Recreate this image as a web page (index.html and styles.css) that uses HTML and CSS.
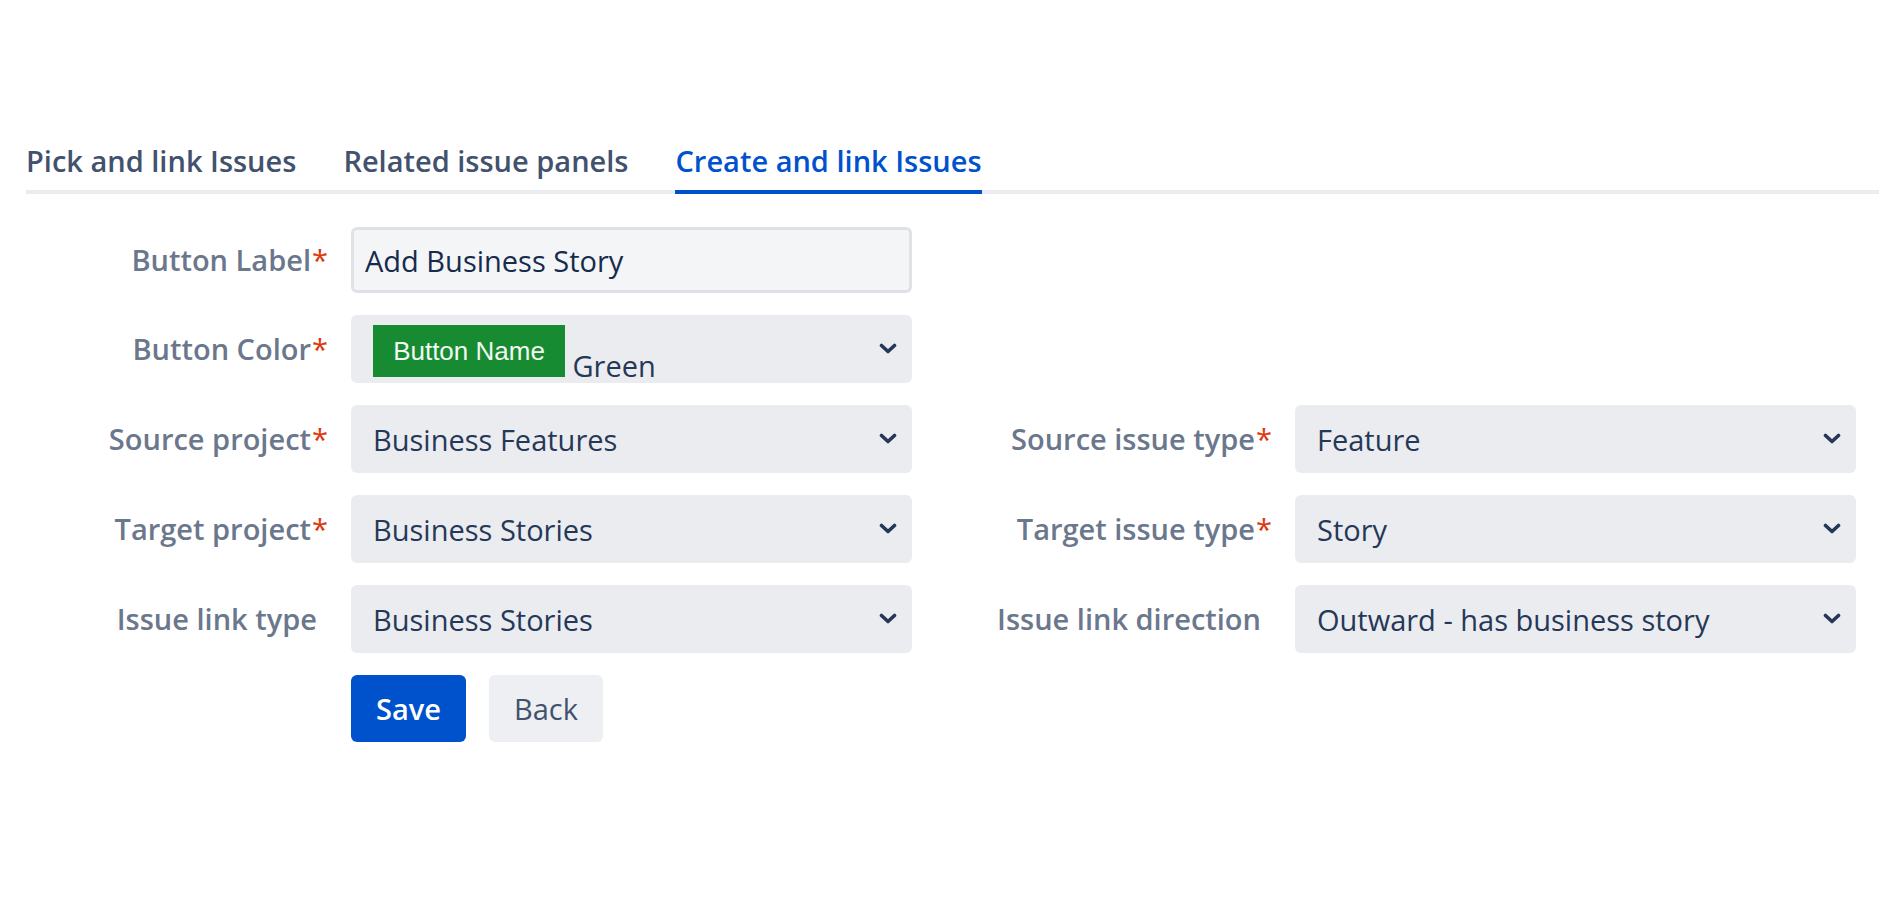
FILE: index.html
```html
<!DOCTYPE html>
<html>
<head>
  <title>Create and link Issues</title>
  <link rel="stylesheet" href="styles.css">
</head>
<body>
  <div class="page">
    <div class="tabs">
      <div class="tab">Pick and link Issues</div>
      <div class="tab">Related issue panels</div>
      <div class="tab active">Create and link Issues</div>
    </div>

    <div class="form">
      <label class="label start">Button Label<span class="req">*</span></label>
      <div class="input">Add Business Story</div>

      <label class="label start">Button Color<span class="req">*</span></label>
      <div class="select">
        <div class="value swatch-value"><span class="swatch">Button Name</span> Green</div>
        <svg class="chevron" width="18" height="12" viewBox="0 0 18 12"><polyline points="2.5,2.5 9,8.5 15.5,2.5" fill="none" stroke="#253858" stroke-width="3.6" stroke-linecap="round" stroke-linejoin="round"/></svg>
      </div>

      <label class="label start">Source project<span class="req">*</span></label>
      <div class="select">
        <div class="value">Business Features</div>
        <svg class="chevron" width="18" height="12" viewBox="0 0 18 12"><polyline points="2.5,2.5 9,8.5 15.5,2.5" fill="none" stroke="#253858" stroke-width="3.6" stroke-linecap="round" stroke-linejoin="round"/></svg>
      </div>
      <label class="label">Source issue type<span class="req">*</span></label>
      <div class="select">
        <div class="value">Feature</div>
        <svg class="chevron" width="18" height="12" viewBox="0 0 18 12"><polyline points="2.5,2.5 9,8.5 15.5,2.5" fill="none" stroke="#253858" stroke-width="3.6" stroke-linecap="round" stroke-linejoin="round"/></svg>
      </div>

      <label class="label start">Target project<span class="req">*</span></label>
      <div class="select">
        <div class="value">Business Stories</div>
        <svg class="chevron" width="18" height="12" viewBox="0 0 18 12"><polyline points="2.5,2.5 9,8.5 15.5,2.5" fill="none" stroke="#253858" stroke-width="3.6" stroke-linecap="round" stroke-linejoin="round"/></svg>
      </div>
      <label class="label">Target issue type<span class="req">*</span></label>
      <div class="select">
        <div class="value">Story</div>
        <svg class="chevron" width="18" height="12" viewBox="0 0 18 12"><polyline points="2.5,2.5 9,8.5 15.5,2.5" fill="none" stroke="#253858" stroke-width="3.6" stroke-linecap="round" stroke-linejoin="round"/></svg>
      </div>

      <label class="label start optional">Issue link type</label>
      <div class="select">
        <div class="value">Business Stories</div>
        <svg class="chevron" width="18" height="12" viewBox="0 0 18 12"><polyline points="2.5,2.5 9,8.5 15.5,2.5" fill="none" stroke="#253858" stroke-width="3.6" stroke-linecap="round" stroke-linejoin="round"/></svg>
      </div>
      <label class="label optional">Issue link direction</label>
      <div class="select">
        <div class="value">Outward - has business story</div>
        <svg class="chevron" width="18" height="12" viewBox="0 0 18 12"><polyline points="2.5,2.5 9,8.5 15.5,2.5" fill="none" stroke="#253858" stroke-width="3.6" stroke-linecap="round" stroke-linejoin="round"/></svg>
      </div>

      <div class="actions">
        <button class="button primary">Save</button>
        <button class="button">Back</button>
      </div>
    </div>
  </div>
</body>
</html>
```

FILE: styles.css
```css
body {
    margin: 0;
    padding: 0;
    background-color: #FFF;
    font-family: 'Open Sans', 'Noto Sans', sans-serif;
    font-size: 29px;
    color: #172B4D;
}

.page {
    padding: 141px 1px 0 26px;
}

.tabs {
    display: flex;
    gap: 47px;
    border-bottom: 4px solid #EBECF0;
}

.tab {
    font-weight: 600;
    line-height: 40px;
    padding-bottom: 9px;
    margin-bottom: -4px;
    border-bottom: 4px solid transparent;
    color: #42526E;
}

.tab.active {
    color: #0052CC;
    border-bottom-color: #0052CC;
}

.form {
    display: grid;
    grid-template-columns: 302px 561px 337px 561px;
    column-gap: 23px;
    row-gap: 22px;
    align-items: center;
    margin-top: 33px;
}

.label {
    text-align: right;
    font-weight: 600;
    color: #6B778C;
    line-height: 40px;
}

.label.start {
    grid-column: 1;
}

.label.optional {
    padding-right: 11px;
}

.req {
    color: #DE350B;
    font-weight: 400;
    margin-left: 1px;
}

.input {
    box-sizing: border-box;
    height: 66px;
    display: flex;
    align-items: center;
    padding: 0 11px;
    background-color: #F4F5F7;
    border: 3px solid #DFE1E6;
    border-radius: 6px;
    color: #172B4D;
}

.select {
    box-sizing: border-box;
    height: 68px;
    display: flex;
    align-items: center;
    justify-content: space-between;
    padding: 0 15px 0 22px;
    background-color: #EBECF0;
    border-radius: 6px;
    color: #253858;
}

.value {
    white-space: nowrap;
}

.swatch-value {
    align-self: flex-end;
    line-height: 1;
    padding-bottom: 3px;
}

.swatch {
    display: inline-block;
    overflow: hidden;
    width: 192px;
    height: 52px;
    line-height: 52px;
    text-align: center;
    background-color: #178B32;
    color: #F2F8F2;
    font-family: 'Liberation Sans', Arial, sans-serif;
    font-size: 26px;
}

.chevron {
    flex: none;
}

.actions {
    grid-column: 2;
    display: flex;
    gap: 23px;
}

.button {
    height: 67px;
    padding: 0 25px;
    font-family: 'Open Sans', 'Noto Sans', sans-serif;
    font-size: 29px;
    border: none;
    border-radius: 6px;
    background-color: #EEEFF2;
    color: #42526E;
    cursor: pointer;
}

.button.primary {
    background-color: #0052CC;
    color: #FFF;
    font-weight: 600;
}
```
